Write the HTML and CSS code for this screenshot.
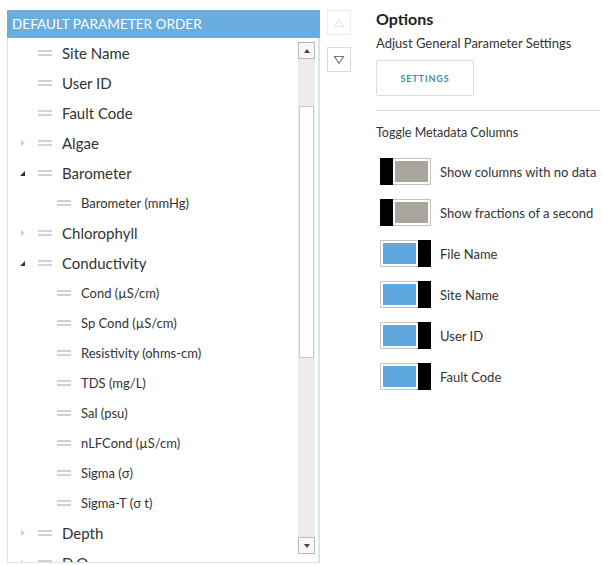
FILE: index.html
```html
<!DOCTYPE html>
<html>
<head>
<meta charset="utf-8">
<link rel="stylesheet" href="styles.css">
</head>
<body>
<div class="page">
  <div class="tree">
    <div class="tree-head">DEFAULT PARAMETER ORDER</div>
    <div class="tree-body">
      <div class="rows">
        <div class="row top"><span class="tw"></span><span class="grip"></span><span class="lbl">Site Name</span></div>
        <div class="row top"><span class="tw"></span><span class="grip"></span><span class="lbl">User ID</span></div>
        <div class="row top"><span class="tw"></span><span class="grip"></span><span class="lbl">Fault Code</span></div>
        <div class="row top"><span class="tw closed"></span><span class="grip"></span><span class="lbl">Algae</span></div>
        <div class="row top"><span class="tw open"></span><span class="grip"></span><span class="lbl">Barometer</span></div>
        <div class="row child"><span class="grip"></span><span class="lbl">Barometer (mmHg)</span></div>
        <div class="row top"><span class="tw closed"></span><span class="grip"></span><span class="lbl">Chlorophyll</span></div>
        <div class="row top"><span class="tw open"></span><span class="grip"></span><span class="lbl">Conductivity</span></div>
        <div class="row child"><span class="grip"></span><span class="lbl">Cond (µS/cm)</span></div>
        <div class="row child"><span class="grip"></span><span class="lbl">Sp Cond (µS/cm)</span></div>
        <div class="row child"><span class="grip"></span><span class="lbl">Resistivity (ohms-cm)</span></div>
        <div class="row child"><span class="grip"></span><span class="lbl">TDS (mg/L)</span></div>
        <div class="row child"><span class="grip"></span><span class="lbl">Sal (psu)</span></div>
        <div class="row child"><span class="grip"></span><span class="lbl">nLFCond (µS/cm)</span></div>
        <div class="row child"><span class="grip"></span><span class="lbl">Sigma (σ)</span></div>
        <div class="row child"><span class="grip"></span><span class="lbl">Sigma-T (σ t)</span></div>
        <div class="row top"><span class="tw closed"></span><span class="grip"></span><span class="lbl">Depth</span></div>
        <div class="row top"><span class="tw closed"></span><span class="grip"></span><span class="lbl">D.O.</span></div>
      </div>
      <div class="scrollbar">
        <div class="sb-btn"><span class="sb-up"></span></div>
        <div class="sb-track">
          <div class="sb-gap1"></div>
          <div class="sb-thumb"></div>
        </div>
        <div class="sb-btn"><span class="sb-down"></span></div>
      </div>
    </div>
  </div>

  <div class="movers">
    <div class="mv mv-up">
      <svg width="12" height="10" viewBox="0 0 12 10"><path d="M1.5 8.5 L6 1.5 L10.5 8.5 Z" fill="none" stroke="#e2e2e2" stroke-width="1.2"/></svg>
    </div>
    <div class="mv mv-down">
      <svg width="12" height="10" viewBox="0 0 12 10"><path d="M1.5 1.5 L10.5 1.5 L6 8.5 Z" fill="none" stroke="#777" stroke-width="1.2"/></svg>
    </div>
  </div>

  <div class="options">
    <div class="opt-title">Options</div>
    <div class="opt-sub">Adjust General Parameter Settings</div>
    <div class="btn-settings">SETTINGS</div>
    <div class="divider"></div>
    <div class="opt-sub2">Toggle Metadata Columns</div>
    <div class="toggles">
      <div class="tg-row"><span class="tg off"><span class="knob"></span><span class="fill"></span></span><span class="tg-lbl">Show columns with no data</span></div>
      <div class="tg-row"><span class="tg off"><span class="knob"></span><span class="fill"></span></span><span class="tg-lbl">Show fractions of a second</span></div>
      <div class="tg-row"><span class="tg on"><span class="fill"></span><span class="knob"></span></span><span class="tg-lbl">File Name</span></div>
      <div class="tg-row"><span class="tg on"><span class="fill"></span><span class="knob"></span></span><span class="tg-lbl">Site Name</span></div>
      <div class="tg-row"><span class="tg on"><span class="fill"></span><span class="knob"></span></span><span class="tg-lbl">User ID</span></div>
      <div class="tg-row"><span class="tg on"><span class="fill"></span><span class="knob"></span></span><span class="tg-lbl">Fault Code</span></div>
    </div>
  </div>
</div>
</body>
</html>
```

FILE: styles.css
```css
* { box-sizing: border-box; }
html, body { margin: 0; padding: 0; background: #fff; }
body {
  font-family: Lato, "Open Sans", "Liberation Sans", sans-serif;
  color: #333;
  width: 603px;
  height: 565px;
  overflow: hidden;
}
.page {
  display: flex;
  align-items: flex-start;
  padding: 10px 0 0 7px;
}

/* tree */
.tree { width: 313px; }
.tree-head {
  height: 28px;
  line-height: 28px;
  background: #6aaee0;
  color: #fff;
  font-size: 13.6px;
  padding-left: 5px;
  white-space: nowrap;
}
.tree-body {
  display: flex;
  height: 525px;
  border: 1px solid #d6e8ea;
  border-top: none;
  border-right: 2px solid #d3e9e8;
  overflow: hidden;
}
.rows { flex: 1; }
.row {
  height: 30px;
  display: flex;
  align-items: center;
  white-space: nowrap;
}
.row.top { padding-left: 12px; }
.row.top .lbl { font-size: 15px; color: #333; }
.row.child { padding-left: 49px; }
.row.child .lbl { font-size: 13px; color: #333; }
.tw {
  width: 6px;
  height: 7px;
  margin-right: 12px;
  position: relative;
}
.tw.closed::before {
  content: "";
  position: absolute;
  left: 1px; top: 0;
  border-left: 4px solid #cfcfcf;
  border-top: 3.5px solid transparent;
  border-bottom: 3.5px solid transparent;
}
.tw.open::before {
  content: "";
  position: absolute;
  left: 0; top: 1px;
  border-right: 5px solid #333;
  border-top: 5px solid transparent;
}
.grip {
  width: 14px;
  height: 6px;
  border-top: 2px solid #d2d2d2;
  border-bottom: 2px solid #d2d2d2;
  margin-right: 10px;
}

/* scrollbar */
.scrollbar {
  width: 17px;
  margin: 4px 3px 8px 0;
  display: flex;
  flex-direction: column;
  background: #ececec;
}
.sb-btn {
  height: 17px;
  border: 1px solid #b9b9b9;
  background: #f7f7f7;
  display: flex;
  align-items: center;
  justify-content: center;
}
.sb-up {
  border-bottom: 4px solid #444;
  border-left: 3.5px solid transparent;
  border-right: 3.5px solid transparent;
}
.sb-down {
  border-top: 4px solid #444;
  border-left: 3.5px solid transparent;
  border-right: 3.5px solid transparent;
}
.sb-track { flex: 1; padding: 0 1px; }
.sb-gap1 { height: 47px; }
.sb-thumb {
  height: 252px;
  background: #fff;
  border: 1px solid #c9c9c9;
}

/* move buttons */
.movers {
  display: flex;
  flex-direction: column;
  gap: 12px;
  margin-left: 7px;
}
.mv {
  width: 24px;
  height: 25px;
  border: 1px solid #ececec;
  display: flex;
  align-items: center;
  justify-content: center;
  background: #fff;
}
.mv-down { border-color: #dadada; }

/* options */
.options {
  margin-left: 25px;
  width: 224px;
}
.opt-title {
  font-size: 16px;
  font-weight: 700;
  color: #222;
  height: 18px;
  line-height: 18px;
}
.opt-sub {
  font-size: 13px;
  color: #333;
  margin-top: 7px;
  line-height: 17px;
  white-space: nowrap;
}
.btn-settings {
  margin-top: 8px;
  width: 98px;
  height: 36px;
  border: 1px solid #dcdcdc;
  border-radius: 2px;
  display: flex;
  align-items: center;
  justify-content: center;
  font-size: 9px;
  font-weight: 700;
  letter-spacing: 0.9px;
  color: #3f8f9f;
}
.divider {
  margin-top: 14px;
  height: 1px;
  background: #dedede;
}
.opt-sub2 {
  font-size: 12.5px;
  color: #333;
  margin-top: 14px;
  line-height: 16px;
  white-space: nowrap;
}
.toggles {
  margin-top: 17px;
  display: flex;
  flex-direction: column;
  gap: 14px;
}
.tg-row {
  display: flex;
  align-items: center;
  height: 27px;
}
.tg {
  width: 51px;
  height: 27px;
  margin-left: 4px;
  display: flex;
  border: 1px solid #c4c4c4;
  background: #fff;
}
.tg .knob { width: 13px; background: #000; margin: -1px; }
.tg .fill { flex: 1; margin: 2px; }
.tg.off .fill { background: #a8a59c; margin-left: 3px; }
.tg.on .fill { background: #5ea6de; margin-right: 3px; }
.tg-lbl {
  margin-left: 9px;
  font-size: 13px;
  color: #333;
  white-space: nowrap;
}
```
